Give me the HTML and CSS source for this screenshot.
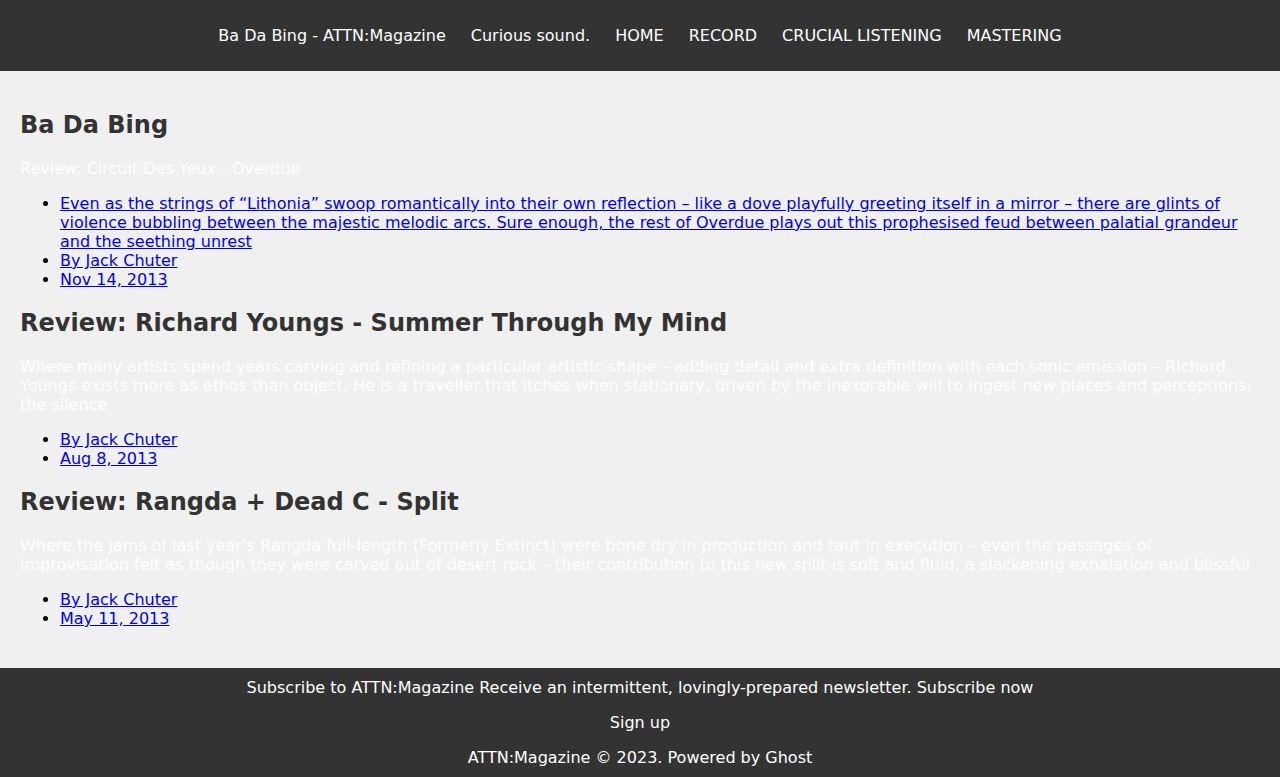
FILE: index.html
```html
<!DOCTYPE html>
<html lang="en">
<head>
<meta charset="utf-8">
<title>Ba Da Bing - ATTN:Magazine</title>
<link rel="stylesheet" href="styles.css">
</head>
<body>
<header class="site-header">
  <nav class="site-nav">
    <a href="#">Ba Da Bing - ATTN:Magazine</a>
    <a href="#">Curious sound.</a>
    <a href="#">HOME</a>
    <a href="#">RECORD</a>
    <a href="#">CRUCIAL LISTENING</a>
    <a href="#">MASTERING</a>
  </nav>
</header>
<main class="site-main">
  <h2 class="title">Ba Da Bing</h2>
  <p class="excerpt">Review: Circuit Des Yeux - Overdue</p>
  <ul class="meta">
    <li><a href="#">Even as the strings of “Lithonia” swoop romantically into their own reflection – like a dove playfully greeting itself in a mirror – there are glints of violence bubbling between the majestic melodic arcs. Sure enough, the rest of Overdue plays out this prophesised feud between palatial grandeur and the seething unrest</a></li>
    <li><a href="#">By Jack Chuter</a></li>
    <li><a href="#">Nov 14, 2013</a></li>
  </ul>
  <h2 class="title">Review: Richard Youngs - Summer Through My Mind</h2>
  <p class="excerpt">Where many artists spend years carving and refining a particular artistic shape – adding detail and extra definition with each sonic emission – Richard Youngs exists more as ethos than object. He is a traveller that itches when stationary, driven by the inexorable will to ingest new places and perceptions; the silence</p>
  <ul class="meta">
    <li><a href="#">By Jack Chuter</a></li>
    <li><a href="#">Aug 8, 2013</a></li>
  </ul>
  <h2 class="title">Review: Rangda + Dead C - Split</h2>
  <p class="excerpt">Where the jams of last year’s Rangda full-length (Formerly Extinct) were bone dry in production and taut in execution – even the passages of improvisation felt as though they were carved out of desert rock – their contribution to this new split is soft and fluid; a slackening exhalation and blissful</p>
  <ul class="meta">
    <li><a href="#">By Jack Chuter</a></li>
    <li><a href="#">May 11, 2013</a></li>
  </ul>
</main>
<footer class="site-footer">
  <p>Subscribe to ATTN:Magazine Receive an intermittent, lovingly-prepared newsletter. Subscribe now</p>
  <p>Sign up</p>
  <p>ATTN:Magazine © 2023. Powered by Ghost</p>
</footer>
</body>
</html>
```
FILE: styles.css
```css
html, body {
  margin: 0;
  padding: 0;
}
body {
  font-family: "DejaVu Sans", sans-serif;
  font-size: 16px;
  background: #f0f0f0;
  color: #333;
  min-height: 100vh;
  display: flex;
  flex-direction: column;
}
.site-header {
  background: #333;
  height: 71px;
  display: flex;
  align-items: center;
  justify-content: center;
}
.site-nav {
  display: flex;
  gap: 25px;
}
.site-nav a {
  color: #fff;
  text-decoration: none;
}
.site-main {
  flex: 1;
  padding: 20px;
}
.title {
  font-size: 24px;
  font-weight: bold;
  color: #333;
  margin: 20px 0;
}
.excerpt {
  color: #fff;
  margin: 16px 0;
}
.meta {
  margin: 16px 0;
  padding-left: 40px;
  color: #000;
}
.meta a {
  color: #0000ee;
}
.site-footer {
  background: #333;
  color: #fff;
  text-align: center;
  padding: 10px 20px;
  display: flex;
  flex-direction: column;
  gap: 16px;
}
.site-footer p {
  margin: 0;
}
```
